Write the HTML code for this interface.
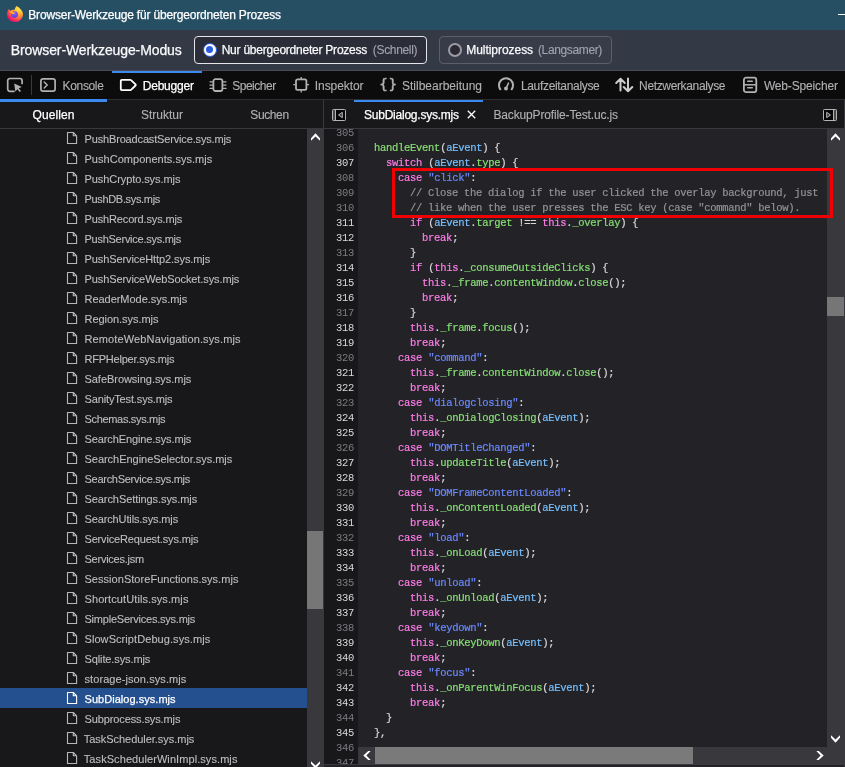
<!DOCTYPE html>
<html lang="de"><head><meta charset="utf-8"><title>Browser-Werkzeuge für übergeordneten Prozess</title>
<style>
html,body{margin:0;padding:0}
body{width:845px;height:767px;overflow:hidden;position:relative;background:#232327;font-family:"Liberation Sans",sans-serif}
.a{position:absolute}
.t{position:absolute;white-space:pre;line-height:20px;height:20px;font-family:"Liberation Sans",sans-serif}
#title{left:0;top:0;width:845px;height:30px;background:#264f64}
#mode{left:0;top:30px;width:845px;height:40px;background:#343946}
#btn1{left:194px;top:36px;width:231px;height:26px;border:1px solid #e4e4ea;border-radius:4px;background:#2b2d38}
#btn2{left:439px;top:36px;width:171px;height:26px;border:1px solid #5c5e6b;border-radius:4px;background:#383b48}
#r1{left:203px;top:43px;width:14px;height:14px;border-radius:50%;background:#fff;box-sizing:border-box;border:1.700px solid #2a5be0}
#r1:after{content:"";position:absolute;left:1.800px;top:1.800px;width:7px;height:7px;border-radius:50%;background:#2a5be0}
#r2{left:448px;top:43px;width:14px;height:14px;border-radius:50%;background:#2b2a33;box-sizing:border-box;border:2px solid #9a9ba6}
#tbtop{left:0;top:70px;width:845px;height:1px;background:#4a4b57}
#toolbar{left:0;top:71px;width:845px;height:28px;background:#0c0c0d}
#tbbot{left:0;top:99px;width:845px;height:1px;background:#2f2f33}
#tabrow{left:0;top:100px;width:845px;height:28px;background:#18181a}
#tabbot{left:0;top:128px;width:845px;height:1px;background:#38383d}
#dbgline{left:112px;top:71px;width:90px;height:2px;background:#3a8af0}
#qline{left:0;top:99px;width:107px;height:3px;background:#3a8af0}
#sline{left:354px;top:100px;width:129px;height:2px;background:#3a8af0}
#tbsep{left:31px;top:75px;width:1px;height:20px;background:#3a3a3e}
#vdiv{left:323px;top:100px;width:1px;height:29px;background:#38383d}
#side{left:0;top:129px;width:323px;height:638px;background:#18181a}
#selrow{left:0;top:688px;width:307px;height:20px;background:#25508f}
#sbar{left:307px;top:129px;width:17px;height:638px;background:#39393d}
#sthumb{left:307px;top:531px;width:16px;height:78px;background:#767676}
#gutter{left:324px;top:129px;width:34px;height:635px;background:#18181a}
#editor{left:358px;top:129px;width:469px;height:618px;background:#232327}
#vbar{left:827px;top:129px;width:18px;height:635px;background:#39393d}
#vthumb{left:827px;top:297px;width:17px;height:19px;background:#767676}
#hbar{left:358px;top:747px;width:469px;height:17px;background:#39393d}
#hthumb{left:375px;top:747px;width:318px;height:17px;background:#7a7a7a}
#edbot{left:324px;top:764px;width:521px;height:1px;background:#3a3a3e}
#edfoot{left:324px;top:765px;width:521px;height:2px;background:#232327}
#minim{left:838px;top:14px;width:7px;height:1px;background:#fff}
#code{position:absolute;left:325px;top:129px;width:502px;height:635px;overflow:hidden}
.ln{position:absolute;left:0;height:15px;width:900px}
.ln i{position:absolute;left:0;top:0;width:29px;text-align:right;font:normal 10.5px/15px "Liberation Mono",monospace;letter-spacing:-.3px}
.ln pre{position:absolute;left:37.1px;top:0;margin:0;font:normal 10.5px/15px "Liberation Mono",monospace;letter-spacing:-.3px;color:#d7d7db;-webkit-text-stroke:.2px}
.nd{color:#7d7d82}
.nb{color:#dadade}
.k{color:#ff7de9}.g{color:#86de74}.b{color:#75bfff}.s{color:#6b89ff}.c{color:#939393}
#redbox{position:absolute;left:392px;top:168px;width:435px;height:44px;border:3px solid #f00000}
svg{position:absolute;overflow:visible}
.fi{left:66px;color:#b8b8ba}
.fi.sel{color:#fff}
#code,#texts{will-change:transform}
#texts{position:absolute;left:0;top:0;width:845px;height:767px}

</style></head><body>
<svg width="0" height="0" style="position:absolute"><defs>
<g id="file"><path d="M1.500 1.500h5.800l3.300 3.300v7.700h-9.100z M7.300 1.500v3.300h3.300" fill="none" stroke="currentColor" stroke-width="1.100" stroke-linejoin="round"/></g>
<radialGradient id="ffg" cx="0.78" cy="0.12" r="1.05"><stop offset="0" stop-color="#fff44f"/><stop offset="0.3" stop-color="#ffbd2f"/><stop offset="0.6" stop-color="#ff7139"/><stop offset="0.85" stop-color="#f5156c"/><stop offset="1" stop-color="#e31587"/></radialGradient>
<radialGradient id="ffp" cx="0.5" cy="0.3" r="0.8"><stop offset="0" stop-color="#9059ff"/><stop offset="1" stop-color="#4a3be0"/></radialGradient>
</defs></svg>
<div id="title" class="a"></div>
<div id="minim" class="a"></div>
<svg style="left:7px;top:6px" width="16" height="16" viewBox="0 0 16 16">
<path d="M9.700 0C10.800.8 12.800 2.200 14.300 3.900 15.400 5.200 16 6.600 16 8.200 16 12.500 12.400 16 8 16 3.600 16 0 12.600 0 8.300 0 6.500.5 4.800 1.600 3.500 1.800 3.300 2.100 3.200 2.300 3.600 2.600 4.200 3 4.500 3.500 4.700 4.600 3.700 6 3.500 7.500 3.900 7.800 2.400 8.600 1 9.700 0Z" fill="url(#ffg)"/>
<circle cx="7.600" cy="8.600" r="3.300" fill="url(#ffp)"/>
<path d="M2.500 5.500C4 5.100 5.600 5.500 6.700 6.400 7.500 6.300 8.300 6.600 8.700 7.100 8 7.100 7.500 7.400 7.200 7.800 6.700 8.400 5.800 8.300 5.300 7.900 4.700 7.400 3.500 7 2.500 5.500Z" fill="#ffb02a"/>
</svg>
<div id="mode" class="a"></div>
<div id="btn1" class="a"></div><div id="r1" class="a"></div>
<div id="btn2" class="a"></div><div id="r2" class="a"></div>
<div id="tbtop" class="a"></div>
<div id="toolbar" class="a"></div>
<div id="tbbot" class="a"></div>
<div id="tabrow" class="a"></div>
<div id="tabbot" class="a"></div>
<div id="dbgline" class="a"></div>
<div id="qline" class="a"></div>
<div id="sline" class="a"></div>
<div id="tbsep" class="a"></div>
<div id="vdiv" class="a"></div>
<div id="side" class="a"></div>
<div id="selrow" class="a"></div>
<div id="sbar" class="a"></div><div id="sthumb" class="a"></div>
<div id="gutter" class="a"></div>
<div id="editor" class="a"></div>
<div id="vbar" class="a"></div><div id="vthumb" class="a"></div>
<div id="hbar" class="a"></div><div id="hthumb" class="a"></div>
<div id="edbot" class="a"></div><div id="edfoot" class="a"></div>
<!-- toolbar icons -->
<svg style="left:7px;top:77px;color:#b1b1b3" width="16" height="16" viewBox="0 0 16 16"><path d="M7 14.300H2.900A2.200 2.200 0 0 1 .7 12.100V3.700A2.200 2.200 0 0 1 2.900 1.500h10A2.200 2.200 0 0 1 15.100 3.700V6.500" fill="none" stroke="currentColor" stroke-width="1.700" stroke-linecap="round"/><path d="M7.200 6.600l7.600 3.400-3.100 1.200 2.300 2.900-1.300 1-2.300-2.900-2.100 2.300z" fill="currentColor"/></svg>
<svg style="left:40px;top:78px;color:#b1b1b3" width="16" height="14" viewBox="0 0 16 14"><rect x=".9" y=".9" width="14.200" height="12.200" rx="2.200" fill="none" stroke="currentColor" stroke-width="1.700"/><path d="M4.200 4l3 3-3 3" fill="none" stroke="currentColor" stroke-width="1.500" stroke-linecap="round" stroke-linejoin="round"/></svg>
<svg style="left:120px;top:79px;color:#fff" width="17" height="12" viewBox="0 0 17 12"><path d="M1.800.8h8.400c.4 0 .8.200 1.100.5l4.200 4.100c.3.300.3.800 0 1.100l-4.200 4.100c-.3.300-.7.500-1.100.5H1.800c-.6 0-1-.4-1-1V1.800c0-.6.400-1 1-1z" fill="none" stroke="currentColor" stroke-width="1.800" stroke-linejoin="round"/></svg>
<svg style="left:209px;top:78px;color:#b1b1b3" width="18" height="14" viewBox="0 0 18 14"><rect x="4.400" y="1.200" width="9" height="11.800" rx="2" fill="none" stroke="currentColor" stroke-width="1.800"/><path d="M1 3.800h2.600M1 7.100h2.600M1 10.400h2.600M14.400 3.800h2.600M14.400 7.100h2.600M14.400 10.400h2.600" stroke="currentColor" stroke-width="1.300" stroke-linecap="round"/></svg>
<svg style="left:293px;top:77px;color:#b1b1b3" width="16" height="16" viewBox="0 0 16 16"><rect x="3" y="2.400" width="10.400" height="10.400" rx="1.600" fill="none" stroke="currentColor" stroke-width="1.800"/><path d="M8.200 0v2M8.200 13.200v2.300M.3 7.600h2M13.900 7.600h2.200" stroke="currentColor" stroke-width="1.300"/></svg>
<svg style="left:379px;top:75px;will-change:transform" width="18" height="20" viewBox="0 0 18 20"><text y="14.300" font-family="DejaVu Sans, Liberation Sans, sans-serif" font-size="14.200" fill="#b1b1b3" stroke="#b1b1b3" stroke-width=".45"><tspan x="0">{</tspan><tspan x="9.200">}</tspan></text></svg>
<svg style="left:498px;top:77px;color:#b1b1b3" width="16" height="16" viewBox="0 0 16 16"><path d="M2.300 12.300A7 7 0 1 1 13.700 12.300" fill="none" stroke="currentColor" stroke-width="2" stroke-linecap="round"/><circle cx="8" cy="11.600" r="2" fill="currentColor"/><path d="M8 11.600L10.400 6.200" stroke="currentColor" stroke-width="1.600" stroke-linecap="round"/></svg>
<svg style="left:615px;top:77px;color:#cdcdcf" width="18" height="16" viewBox="0 0 18 16"><path d="M5.500 13.500V1.800M1.200 6l4.300-4.300L9.800 6M13 1.500v12.700M8.700 10l4.300 4.300L17.300 10" fill="none" stroke="currentColor" stroke-width="2" stroke-linecap="round" stroke-linejoin="round"/></svg>
<svg style="left:743px;top:77px;color:#b1b1b3" width="14" height="16" viewBox="0 0 14 16"><rect x=".9" y=".7" width="12.400" height="14.400" rx="2.200" fill="none" stroke="currentColor" stroke-width="1.800"/><path d="M.7 7.800h12.600" stroke="currentColor" stroke-width="1.500"/><path d="M4.700 4.300h4.600M4.700 10.800h4.600" stroke="currentColor" stroke-width="1.400" stroke-linecap="round"/></svg>
<!-- pane toggles -->
<svg style="left:332px;top:109px;color:#b4b4b6" width="14" height="12" viewBox="0 0 14 12"><rect x=".5" y=".5" width="13" height="11" rx=".8" fill="#060607" stroke="currentColor"/><rect x="1" y="1" width="2.500" height="10" fill="#47474a"/><path d="M3.500.5v11" stroke="currentColor"/><path d="M10.300 3.300v5.400L6.500 6z" fill="#3a3a3c" stroke="currentColor" stroke-width="1" stroke-linejoin="round"/></svg>
<svg style="left:823px;top:109px;color:#b4b4b6" width="14" height="12" viewBox="0 0 14 12"><rect x=".5" y=".5" width="13" height="11" rx=".8" fill="#060607" stroke="currentColor"/><rect x="10.500" y="1" width="2.500" height="10" fill="#47474a"/><path d="M10.500.5v11" stroke="currentColor"/><path d="M3.700 3.300v5.400L7.500 6z" fill="#3a3a3c" stroke="currentColor" stroke-width="1" stroke-linejoin="round"/></svg>
<div class="a" style="left:844px;top:100px;width:1px;height:28px;background:#38383d"></div>
<svg style="left:466.500px;top:109.500px;color:#fff" width="9" height="9" viewBox="0 0 9 9"><path d="M.8.800l7.400 7.400M8.200.8L.8 8.200" stroke="currentColor" stroke-width="1.300"/></svg>
<!-- scrollbar chevrons -->
<svg style="left:311px;top:133px" width="10" height="8" viewBox="0 0 10 8"><polygon points="0,5.200 4.500,.3 9,5.200 9,7.700 4.500,3.400 0,7.700" fill="#fff"/></svg>
<svg style="left:311px;top:760.500px" width="10" height="8" viewBox="0 0 10 8"><polygon points="0,2.800 4.500,7.700 9,2.800 9,.3 4.500,4.600 0,.3" fill="#fff"/></svg>
<svg style="left:831px;top:133px" width="10" height="8" viewBox="0 0 10 8"><polygon points="0,5.200 4.500,.3 9,5.200 9,7.700 4.500,3.400 0,7.700" fill="#fff"/></svg>
<svg style="left:831px;top:735px" width="10" height="8" viewBox="0 0 10 8"><polygon points="0,2.800 4.500,7.700 9,2.800 9,.3 4.500,4.600 0,.3" fill="#fff"/></svg>
<svg style="left:362.500px;top:751px" width="8" height="10" viewBox="0 0 8 10"><polygon points="5.200,0 .3,4.500 5.200,9 7.700,9 3.400,4.500 7.700,0" fill="#fff"/></svg>
<svg style="left:815.500px;top:751px" width="8" height="10" viewBox="0 0 8 10"><polygon points="2.800,0 7.700,4.500 2.800,9 .3,9 4.600,4.500 .3,0" fill="#fff"/></svg>
<div class="a" style="left:844px;top:765px;width:1px;height:2px;background:#38383d"></div>

<div id="code">
<div class="ln" style="top:-3.5px"><i class="nd">305</i><pre></pre></div>
<div class="ln" style="top:11.5px"><i class="nd">306</i><pre>  <span class="g">handleEvent</span>(<span class="b">aEvent</span>) {</pre></div>
<div class="ln" style="top:26.5px"><i class="nb">307</i><pre>    <span class="k">switch</span> (<span class="b">aEvent</span>.<span class="g">type</span>) {</pre></div>
<div class="ln" style="top:41.5px"><i class="nd">308</i><pre>      <span class="k">case</span> <span class="s">"click"</span>:</pre></div>
<div class="ln" style="top:56.5px"><i class="nd">309</i><pre>        <span class="c">// Close the dialog if the user clicked the overlay background, just</span></pre></div>
<div class="ln" style="top:71.5px"><i class="nd">310</i><pre>        <span class="c">// like when the user presses the ESC key (case "command" below).</span></pre></div>
<div class="ln" style="top:86.5px"><i class="nb">311</i><pre>        <span class="k">if</span> (<span class="b">aEvent</span>.<span class="g">target</span> !== <span class="k">this</span>.<span class="g">_overlay</span>) {</pre></div>
<div class="ln" style="top:101.5px"><i class="nb">312</i><pre>          <span class="k">break</span>;</pre></div>
<div class="ln" style="top:116.5px"><i class="nd">313</i><pre>        }</pre></div>
<div class="ln" style="top:131.5px"><i class="nb">314</i><pre>        <span class="k">if</span> (<span class="k">this</span>.<span class="g">_consumeOutsideClicks</span>) {</pre></div>
<div class="ln" style="top:146.5px"><i class="nb">315</i><pre>          <span class="k">this</span>.<span class="g">_frame</span>.<span class="g">contentWindow</span>.<span class="g">close</span>();</pre></div>
<div class="ln" style="top:161.5px"><i class="nb">316</i><pre>          <span class="k">break</span>;</pre></div>
<div class="ln" style="top:176.5px"><i class="nd">317</i><pre>        }</pre></div>
<div class="ln" style="top:191.5px"><i class="nb">318</i><pre>        <span class="k">this</span>.<span class="g">_frame</span>.<span class="g">focus</span>();</pre></div>
<div class="ln" style="top:206.5px"><i class="nb">319</i><pre>        <span class="k">break</span>;</pre></div>
<div class="ln" style="top:221.5px"><i class="nd">320</i><pre>      <span class="k">case</span> <span class="s">"command"</span>:</pre></div>
<div class="ln" style="top:236.5px"><i class="nb">321</i><pre>        <span class="k">this</span>.<span class="g">_frame</span>.<span class="g">contentWindow</span>.<span class="g">close</span>();</pre></div>
<div class="ln" style="top:251.5px"><i class="nb">322</i><pre>        <span class="k">break</span>;</pre></div>
<div class="ln" style="top:266.5px"><i class="nd">323</i><pre>      <span class="k">case</span> <span class="s">"dialogclosing"</span>:</pre></div>
<div class="ln" style="top:281.5px"><i class="nb">324</i><pre>        <span class="k">this</span>.<span class="g">_onDialogClosing</span>(<span class="b">aEvent</span>);</pre></div>
<div class="ln" style="top:296.5px"><i class="nb">325</i><pre>        <span class="k">break</span>;</pre></div>
<div class="ln" style="top:311.5px"><i class="nd">326</i><pre>      <span class="k">case</span> <span class="s">"DOMTitleChanged"</span>:</pre></div>
<div class="ln" style="top:326.5px"><i class="nb">327</i><pre>        <span class="k">this</span>.<span class="g">updateTitle</span>(<span class="b">aEvent</span>);</pre></div>
<div class="ln" style="top:341.5px"><i class="nb">328</i><pre>        <span class="k">break</span>;</pre></div>
<div class="ln" style="top:356.5px"><i class="nd">329</i><pre>      <span class="k">case</span> <span class="s">"DOMFrameContentLoaded"</span>:</pre></div>
<div class="ln" style="top:371.5px"><i class="nb">330</i><pre>        <span class="k">this</span>.<span class="g">_onContentLoaded</span>(<span class="b">aEvent</span>);</pre></div>
<div class="ln" style="top:386.5px"><i class="nb">331</i><pre>        <span class="k">break</span>;</pre></div>
<div class="ln" style="top:401.5px"><i class="nd">332</i><pre>      <span class="k">case</span> <span class="s">"load"</span>:</pre></div>
<div class="ln" style="top:416.5px"><i class="nb">333</i><pre>        <span class="k">this</span>.<span class="g">_onLoad</span>(<span class="b">aEvent</span>);</pre></div>
<div class="ln" style="top:431.5px"><i class="nb">334</i><pre>        <span class="k">break</span>;</pre></div>
<div class="ln" style="top:446.5px"><i class="nd">335</i><pre>      <span class="k">case</span> <span class="s">"unload"</span>:</pre></div>
<div class="ln" style="top:461.5px"><i class="nb">336</i><pre>        <span class="k">this</span>.<span class="g">_onUnload</span>(<span class="b">aEvent</span>);</pre></div>
<div class="ln" style="top:476.5px"><i class="nb">337</i><pre>        <span class="k">break</span>;</pre></div>
<div class="ln" style="top:491.5px"><i class="nd">338</i><pre>      <span class="k">case</span> <span class="s">"keydown"</span>:</pre></div>
<div class="ln" style="top:506.5px"><i class="nb">339</i><pre>        <span class="k">this</span>.<span class="g">_onKeyDown</span>(<span class="b">aEvent</span>);</pre></div>
<div class="ln" style="top:521.5px"><i class="nb">340</i><pre>        <span class="k">break</span>;</pre></div>
<div class="ln" style="top:536.5px"><i class="nd">341</i><pre>      <span class="k">case</span> <span class="s">"focus"</span>:</pre></div>
<div class="ln" style="top:551.5px"><i class="nb">342</i><pre>        <span class="k">this</span>.<span class="g">_onParentWinFocus</span>(<span class="b">aEvent</span>);</pre></div>
<div class="ln" style="top:566.5px"><i class="nb">343</i><pre>        <span class="k">break</span>;</pre></div>
<div class="ln" style="top:581.5px"><i class="nd">344</i><pre>    }</pre></div>
<div class="ln" style="top:596.5px"><i class="nb">345</i><pre>  },</pre></div>
<div class="ln" style="top:611.5px"><i class="nd">346</i><pre></pre></div>
<div class="ln" style="top:626.5px"><i class="nd">347</i><pre></pre></div>
</div>
<div id="redbox"></div>
<svg class="fi" style="top:131px" width="12" height="14" viewBox="0 0 12 14"><use href="#file"/></svg>
<svg class="fi" style="top:151px" width="12" height="14" viewBox="0 0 12 14"><use href="#file"/></svg>
<svg class="fi" style="top:171px" width="12" height="14" viewBox="0 0 12 14"><use href="#file"/></svg>
<svg class="fi" style="top:191px" width="12" height="14" viewBox="0 0 12 14"><use href="#file"/></svg>
<svg class="fi" style="top:211px" width="12" height="14" viewBox="0 0 12 14"><use href="#file"/></svg>
<svg class="fi" style="top:231px" width="12" height="14" viewBox="0 0 12 14"><use href="#file"/></svg>
<svg class="fi" style="top:251px" width="12" height="14" viewBox="0 0 12 14"><use href="#file"/></svg>
<svg class="fi" style="top:271px" width="12" height="14" viewBox="0 0 12 14"><use href="#file"/></svg>
<svg class="fi" style="top:291px" width="12" height="14" viewBox="0 0 12 14"><use href="#file"/></svg>
<svg class="fi" style="top:311px" width="12" height="14" viewBox="0 0 12 14"><use href="#file"/></svg>
<svg class="fi" style="top:331px" width="12" height="14" viewBox="0 0 12 14"><use href="#file"/></svg>
<svg class="fi" style="top:351px" width="12" height="14" viewBox="0 0 12 14"><use href="#file"/></svg>
<svg class="fi" style="top:371px" width="12" height="14" viewBox="0 0 12 14"><use href="#file"/></svg>
<svg class="fi" style="top:391px" width="12" height="14" viewBox="0 0 12 14"><use href="#file"/></svg>
<svg class="fi" style="top:411px" width="12" height="14" viewBox="0 0 12 14"><use href="#file"/></svg>
<svg class="fi" style="top:431px" width="12" height="14" viewBox="0 0 12 14"><use href="#file"/></svg>
<svg class="fi" style="top:451px" width="12" height="14" viewBox="0 0 12 14"><use href="#file"/></svg>
<svg class="fi" style="top:471px" width="12" height="14" viewBox="0 0 12 14"><use href="#file"/></svg>
<svg class="fi" style="top:491px" width="12" height="14" viewBox="0 0 12 14"><use href="#file"/></svg>
<svg class="fi" style="top:511px" width="12" height="14" viewBox="0 0 12 14"><use href="#file"/></svg>
<svg class="fi" style="top:531px" width="12" height="14" viewBox="0 0 12 14"><use href="#file"/></svg>
<svg class="fi" style="top:551px" width="12" height="14" viewBox="0 0 12 14"><use href="#file"/></svg>
<svg class="fi" style="top:571px" width="12" height="14" viewBox="0 0 12 14"><use href="#file"/></svg>
<svg class="fi" style="top:591px" width="12" height="14" viewBox="0 0 12 14"><use href="#file"/></svg>
<svg class="fi" style="top:611px" width="12" height="14" viewBox="0 0 12 14"><use href="#file"/></svg>
<svg class="fi" style="top:631px" width="12" height="14" viewBox="0 0 12 14"><use href="#file"/></svg>
<svg class="fi" style="top:651px" width="12" height="14" viewBox="0 0 12 14"><use href="#file"/></svg>
<svg class="fi" style="top:671px" width="12" height="14" viewBox="0 0 12 14"><use href="#file"/></svg>
<svg class="fi sel" style="top:691px" width="12" height="14" viewBox="0 0 12 14"><use href="#file"/></svg>
<svg class="fi" style="top:711px" width="12" height="14" viewBox="0 0 12 14"><use href="#file"/></svg>
<svg class="fi" style="top:731px" width="12" height="14" viewBox="0 0 12 14"><use href="#file"/></svg>
<svg class="fi" style="top:751px" width="12" height="14" viewBox="0 0 12 14"><use href="#file"/></svg>
<div id="texts">
<span id="t0" class="t" style="left:28.30px;top:5.00px;font-size:12px;color:#ffffff;letter-spacing:-0.181px;-webkit-text-stroke:.25px">Browser-Werkzeuge für übergeordneten Prozess</span>
<span id="t1" class="t" style="left:10.80px;top:40.00px;font-size:14px;color:#fbfbfe;letter-spacing:-0.102px;-webkit-text-stroke:.25px">Browser-Werkzeuge-Modus</span>
<span id="t2" class="t" style="left:221.70px;top:40.00px;font-size:12px;color:#fbfbfe;letter-spacing:-0.232px;-webkit-text-stroke:.25px">Nur übergeordneter Prozess</span>
<span id="t3" class="t" style="left:372.80px;top:40.00px;font-size:12px;color:#a2a3ad;letter-spacing:-0.332px;-webkit-text-stroke:.12px">(Schnell)</span>
<span id="t4" class="t" style="left:466.20px;top:40.00px;font-size:12px;color:#fbfbfe;letter-spacing:-0.041px;-webkit-text-stroke:.25px">Multiprozess</span>
<span id="t5" class="t" style="left:538.00px;top:40.00px;font-size:12px;color:#a2a3ad;letter-spacing:-0.373px;-webkit-text-stroke:.12px">(Langsamer)</span>
<span id="t6" class="t" style="left:62.60px;top:75.50px;font-size:12px;color:#b1b1b3;letter-spacing:-0.349px;-webkit-text-stroke:.12px">Konsole</span>
<span id="t7" class="t" style="left:142.80px;top:75.50px;font-size:12px;color:#ffffff;letter-spacing:-0.230px;-webkit-text-stroke:.25px">Debugger</span>
<span id="t8" class="t" style="left:232.20px;top:75.50px;font-size:12px;color:#b1b1b3;letter-spacing:-0.481px;-webkit-text-stroke:.12px">Speicher</span>
<span id="t9" class="t" style="left:314.80px;top:75.50px;font-size:12px;color:#b1b1b3;letter-spacing:-0.070px;-webkit-text-stroke:.12px">Inspektor</span>
<span id="t10" class="t" style="left:402.00px;top:75.50px;font-size:12px;color:#b1b1b3;letter-spacing:-0.006px;-webkit-text-stroke:.12px">Stilbearbeitung</span>
<span id="t11" class="t" style="left:520.90px;top:75.50px;font-size:12px;color:#b1b1b3;letter-spacing:-0.323px;-webkit-text-stroke:.12px">Laufzeitanalyse</span>
<span id="t12" class="t" style="left:639.10px;top:75.50px;font-size:12px;color:#b1b1b3;letter-spacing:-0.357px;-webkit-text-stroke:.12px">Netzwerkanalyse</span>
<span id="t13" class="t" style="left:763.90px;top:75.50px;font-size:12px;color:#b1b1b3;letter-spacing:-0.165px;-webkit-text-stroke:.12px">Web-Speicher</span>
<span id="t14" class="t" style="left:32.60px;top:104.50px;font-size:12px;color:#ffffff;letter-spacing:0.069px;-webkit-text-stroke:.25px">Quellen</span>
<span id="t15" class="t" style="left:141.00px;top:104.50px;font-size:12px;color:#b1b1b3;letter-spacing:-0.002px;-webkit-text-stroke:.12px">Struktur</span>
<span id="t16" class="t" style="left:250.30px;top:104.50px;font-size:12px;color:#b1b1b3;letter-spacing:-0.385px;-webkit-text-stroke:.12px">Suchen</span>
<span id="t17" class="t" style="left:364.00px;top:104.50px;font-size:12px;color:#ffffff;letter-spacing:-0.231px;-webkit-text-stroke:.25px">SubDialog.sys.mjs</span>
<span id="t18" class="t" style="left:493.50px;top:104.50px;font-size:12px;color:#b1b1b3;letter-spacing:-0.154px;-webkit-text-stroke:.12px">BackupProfile-Test.uc.js</span>
<span id="t19" class="t" style="left:84.50px;top:129.20px;font-size:11px;color:#bebec0;letter-spacing:-0.155px;-webkit-text-stroke:.12px">PushBroadcastService.sys.mjs</span>
<span id="t20" class="t" style="left:84.50px;top:149.20px;font-size:11px;color:#bebec0;letter-spacing:0.030px;-webkit-text-stroke:.12px">PushComponents.sys.mjs</span>
<span id="t21" class="t" style="left:84.50px;top:169.20px;font-size:11px;color:#bebec0;letter-spacing:-0.076px;-webkit-text-stroke:.12px">PushCrypto.sys.mjs</span>
<span id="t22" class="t" style="left:84.50px;top:189.20px;font-size:11px;color:#bebec0;letter-spacing:-0.329px;-webkit-text-stroke:.12px">PushDB.sys.mjs</span>
<span id="t23" class="t" style="left:84.50px;top:209.20px;font-size:11px;color:#bebec0;letter-spacing:-0.144px;-webkit-text-stroke:.12px">PushRecord.sys.mjs</span>
<span id="t24" class="t" style="left:84.50px;top:229.20px;font-size:11px;color:#bebec0;letter-spacing:-0.259px;-webkit-text-stroke:.12px">PushService.sys.mjs</span>
<span id="t25" class="t" style="left:84.50px;top:249.20px;font-size:11px;color:#bebec0;letter-spacing:-0.090px;-webkit-text-stroke:.12px">PushServiceHttp2.sys.mjs</span>
<span id="t26" class="t" style="left:84.50px;top:269.20px;font-size:11px;color:#bebec0;letter-spacing:-0.101px;-webkit-text-stroke:.12px">PushServiceWebSocket.sys.mjs</span>
<span id="t27" class="t" style="left:84.50px;top:289.20px;font-size:11px;color:#bebec0;letter-spacing:-0.036px;-webkit-text-stroke:.12px">ReaderMode.sys.mjs</span>
<span id="t28" class="t" style="left:84.50px;top:309.20px;font-size:11px;color:#bebec0;letter-spacing:-0.052px;-webkit-text-stroke:.12px">Region.sys.mjs</span>
<span id="t29" class="t" style="left:84.50px;top:329.20px;font-size:11px;color:#bebec0;letter-spacing:0.130px;-webkit-text-stroke:.12px">RemoteWebNavigation.sys.mjs</span>
<span id="t30" class="t" style="left:84.50px;top:349.20px;font-size:11px;color:#bebec0;letter-spacing:-0.220px;-webkit-text-stroke:.12px">RFPHelper.sys.mjs</span>
<span id="t31" class="t" style="left:84.50px;top:369.20px;font-size:11px;color:#bebec0;letter-spacing:-0.041px;-webkit-text-stroke:.12px">SafeBrowsing.sys.mjs</span>
<span id="t32" class="t" style="left:84.50px;top:389.20px;font-size:11px;color:#bebec0;letter-spacing:-0.139px;-webkit-text-stroke:.12px">SanityTest.sys.mjs</span>
<span id="t33" class="t" style="left:84.50px;top:409.20px;font-size:11px;color:#bebec0;letter-spacing:-0.327px;-webkit-text-stroke:.12px">Schemas.sys.mjs</span>
<span id="t34" class="t" style="left:84.50px;top:429.20px;font-size:11px;color:#bebec0;letter-spacing:-0.107px;-webkit-text-stroke:.12px">SearchEngine.sys.mjs</span>
<span id="t35" class="t" style="left:84.50px;top:449.20px;font-size:11px;color:#bebec0;letter-spacing:-0.032px;-webkit-text-stroke:.12px">SearchEngineSelector.sys.mjs</span>
<span id="t36" class="t" style="left:84.50px;top:469.20px;font-size:11px;color:#bebec0;letter-spacing:-0.273px;-webkit-text-stroke:.12px">SearchService.sys.mjs</span>
<span id="t37" class="t" style="left:84.50px;top:489.20px;font-size:11px;color:#bebec0;letter-spacing:-0.077px;-webkit-text-stroke:.12px">SearchSettings.sys.mjs</span>
<span id="t38" class="t" style="left:84.50px;top:509.20px;font-size:11px;color:#bebec0;letter-spacing:-0.126px;-webkit-text-stroke:.12px">SearchUtils.sys.mjs</span>
<span id="t39" class="t" style="left:84.50px;top:529.20px;font-size:11px;color:#bebec0;letter-spacing:-0.165px;-webkit-text-stroke:.12px">ServiceRequest.sys.mjs</span>
<span id="t40" class="t" style="left:84.50px;top:549.20px;font-size:11px;color:#bebec0;letter-spacing:-0.244px;-webkit-text-stroke:.12px">Services.jsm</span>
<span id="t41" class="t" style="left:84.50px;top:569.20px;font-size:11px;color:#bebec0;letter-spacing:0.038px;-webkit-text-stroke:.12px">SessionStoreFunctions.sys.mjs</span>
<span id="t42" class="t" style="left:84.50px;top:589.20px;font-size:11px;color:#bebec0;letter-spacing:0.091px;-webkit-text-stroke:.12px">ShortcutUtils.sys.mjs</span>
<span id="t43" class="t" style="left:84.50px;top:609.20px;font-size:11px;color:#bebec0;letter-spacing:-0.225px;-webkit-text-stroke:.12px">SimpleServices.sys.mjs</span>
<span id="t44" class="t" style="left:84.50px;top:629.20px;font-size:11px;color:#bebec0;letter-spacing:0.073px;-webkit-text-stroke:.12px">SlowScriptDebug.sys.mjs</span>
<span id="t45" class="t" style="left:84.50px;top:649.20px;font-size:11px;color:#bebec0;letter-spacing:-0.110px;-webkit-text-stroke:.12px">Sqlite.sys.mjs</span>
<span id="t46" class="t" style="left:84.50px;top:669.20px;font-size:11px;color:#bebec0;letter-spacing:0.082px;-webkit-text-stroke:.12px">storage-json.sys.mjs</span>
<span id="t47" class="t" style="left:84.50px;top:689.20px;font-size:11px;color:#ffffff;letter-spacing:0.039px;-webkit-text-stroke:.25px">SubDialog.sys.mjs</span>
<span id="t48" class="t" style="left:84.50px;top:709.20px;font-size:11px;color:#bebec0;letter-spacing:-0.112px;-webkit-text-stroke:.12px">Subprocess.sys.mjs</span>
<span id="t49" class="t" style="left:83.80px;top:729.20px;font-size:11px;color:#bebec0;letter-spacing:-0.038px;-webkit-text-stroke:.12px">TaskScheduler.sys.mjs</span>
<span id="t50" class="t" style="left:83.80px;top:749.20px;font-size:11px;color:#bebec0;letter-spacing:0.074px;-webkit-text-stroke:.12px">TaskSchedulerWinImpl.sys.mjs</span>
</div>
</body></html>
